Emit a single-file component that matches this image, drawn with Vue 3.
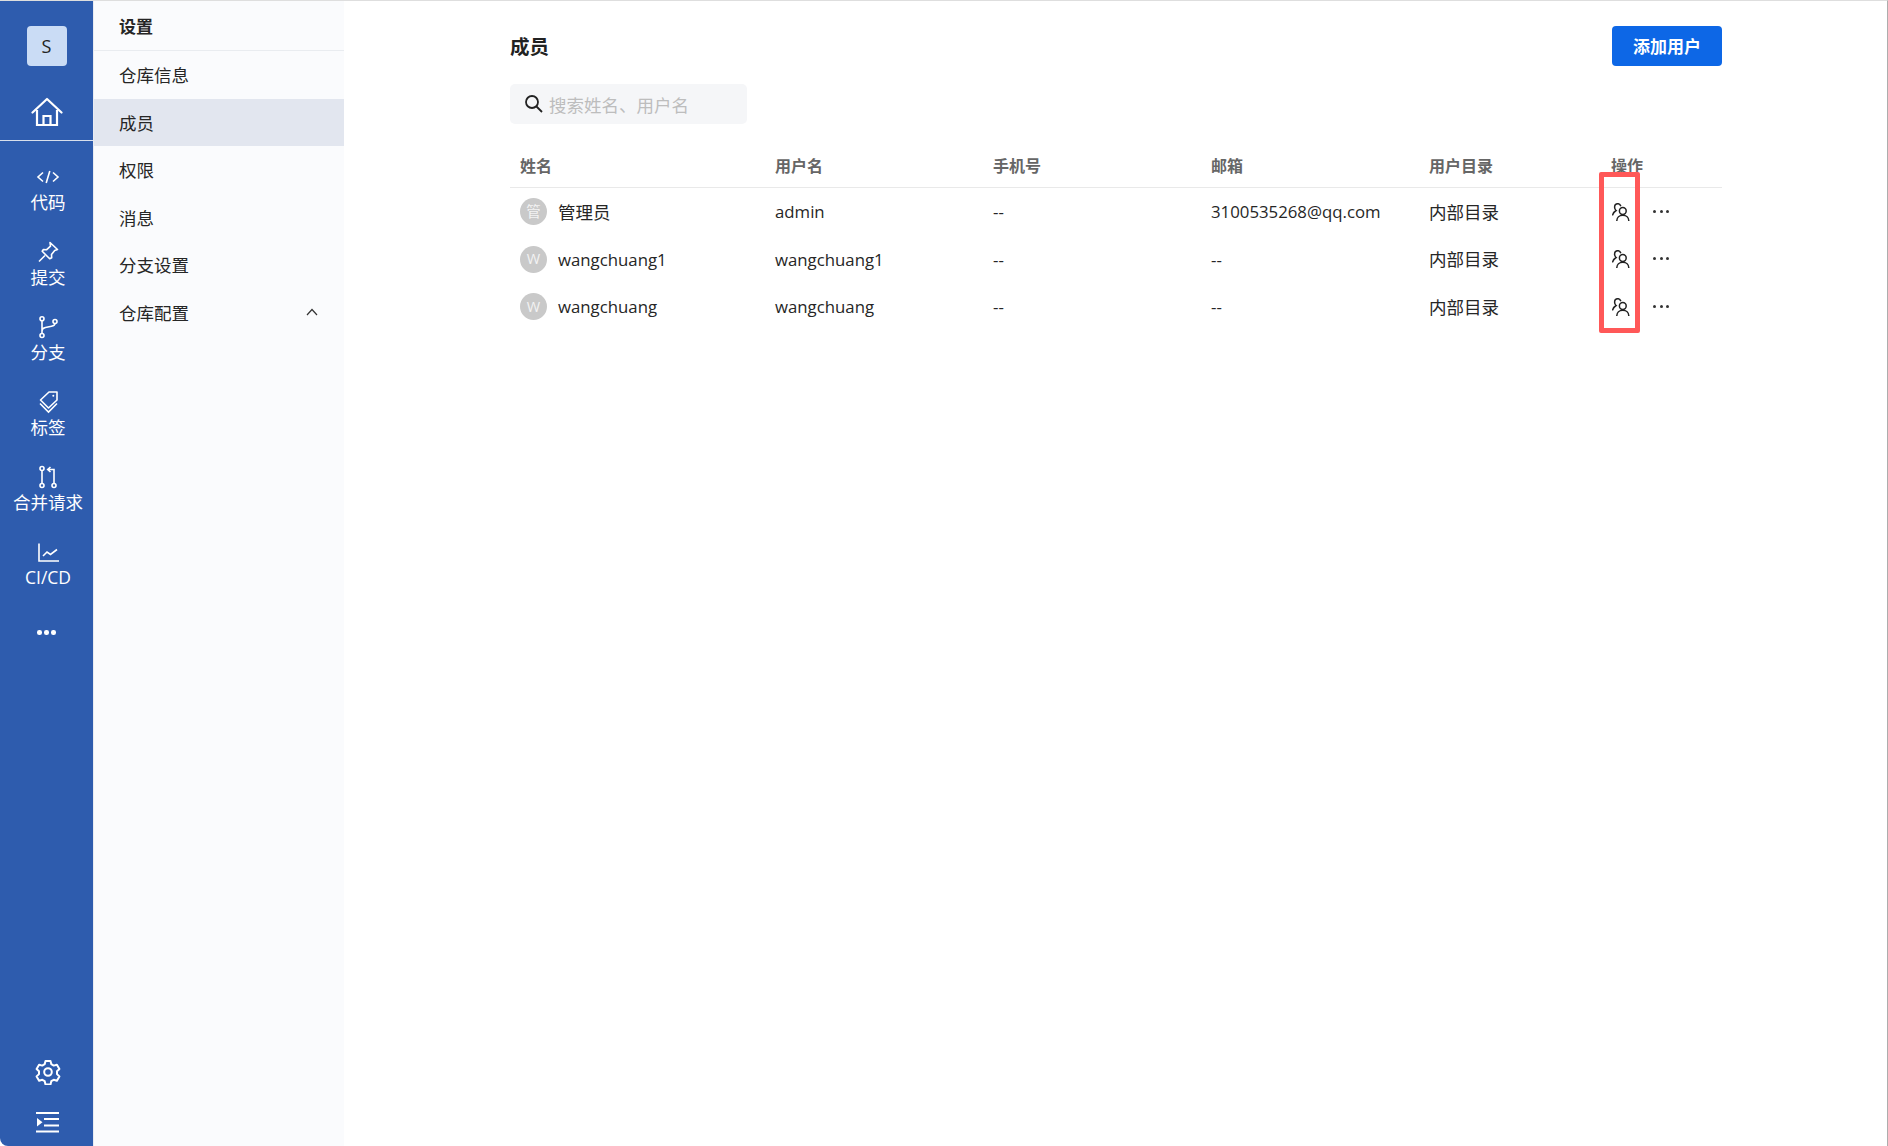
<script setup>
const navItems = [
  { label: '代码', icon: 'code' },
  { label: '提交', icon: 'pin' },
  { label: '分支', icon: 'branch' },
  { label: '标签', icon: 'tag' },
  { label: '合并请求', icon: 'merge' },
  { label: 'CI/CD', icon: 'chart' }
]
const menu = ['仓库信息', '成员', '权限', '消息', '分支设置']
const cols = ['姓名', '用户名', '手机号', '邮箱', '用户目录', '操作']
const rows = [
  { avatar: '管', name: '管理员', user: 'admin', phone: '--', mail: '3100535268@qq.com', dir: '内部目录' },
  { avatar: 'W', name: 'wangchuang1', user: 'wangchuang1', phone: '--', mail: '--', dir: '内部目录' },
  { avatar: 'W', name: 'wangchuang', user: 'wangchuang', phone: '--', mail: '--', dir: '内部目录' }
]
const isLatin = (s) => /^[\x00-\x7f]+$/.test(s)
</script>

<template>
  <div class="app">
    <aside class="rail">
      <div class="logo">S</div>
      <div class="home">
        <svg width="32" height="30" viewBox="0 0 32 30" fill="none" stroke="#fff" stroke-width="2.200">
          <path d="M1.500 15.500 16 2l14.500 13.500" stroke-linejoin="round" stroke-linecap="round" />
          <path d="M6 13v15h20V13" />
          <path d="M12.500 28v-9h7v9" />
        </svg>
      </div>
      <nav class="rail-nav">
        <div v-for="item in navItems" :key="item.label" class="rail-item">
          <svg class="rail-icon" width="24" height="24" viewBox="0 0 24 24" fill="none" stroke="#fff" stroke-width="1.600">
            <g v-if="item.icon === 'code'">
              <path d="M7 7.500 2 12l5 4.500M17 7.500l5 4.500-5 4.500M13.800 6l-3.600 12" />
            </g>
            <g v-else-if="item.icon === 'pin'">
              <path d="M14 2.500 21.500 9.500l-2.800 1-3.200 4 .2 3.300-2 1-7.500-7.500 1.200-1.800 3.300.2 3.800-3.500z" stroke-linejoin="round" />
              <path d="M9 15.500 3 21.500" />
            </g>
            <g v-else-if="item.icon === 'branch'">
              <circle cx="6" cy="3.800" r="2" />
              <circle cx="6" cy="20.500" r="2" />
              <circle cx="19" cy="6.500" r="2" />
              <path d="M6 6v12.300M6 16c0-2.500 1-3 3.500-3.500l6-1.200c2.500-.5 3.500-1.500 3.500-3" />
            </g>
            <g v-else-if="item.icon === 'tag'">
              <path d="M13 2h8v8l-8.500 8L4.500 10z" stroke-linejoin="round" />
              <circle cx="17.300" cy="5.800" r="1" fill="#fff" stroke="none" />
              <path d="M4 13.500 12.500 22l8.500-8.500" />
            </g>
            <g v-else-if="item.icon === 'merge'">
              <circle cx="6" cy="3.500" r="2" />
              <circle cx="6" cy="20.500" r="2" />
              <circle cx="18" cy="20.500" r="2" />
              <path d="M6 5.500v13M18 18.500V4.500h-6M14.500 2l-2.800 2.500 2.800 2.500" />
            </g>
            <g v-else>
              <path d="M3 3.500V21h20" />
              <path d="M7 16 11 12l3.500 2.500L21 9.500" />
            </g>
          </svg>
          <span class="rail-label">{{ item.label }}</span>
        </div>
      </nav>
      <div class="rail-more"><i></i><i></i><i></i></div>
      <div class="rail-bottom">
        <svg width="26" height="26" viewBox="0 0 26 26" fill="none" stroke="#fff" stroke-width="2" stroke-linejoin="round">
          <path d="M10.500 2h5l.8 3.200 2.400 1.400 3.200-.9 2.500 4.300-2.400 2.300v2.800l2.400 2.300-2.500 4.300-3.200-.9-2.400 1.400-.8 3.200h-5l-.8-3.200-2.400-1.400-3.200.9-2.500-4.300 2.400-2.300v-2.800L1.600 10l2.500-4.300 3.200.9 2.400-1.400z" />
          <circle cx="13" cy="13" r="3.800" />
        </svg>
        <svg class="fold" width="24" height="21" viewBox="0 0 24 21" fill="#fff">
          <rect x="0" y="0" width="23" height="2" />
          <rect x="8" y="6" width="15" height="2" />
          <rect x="8" y="12.500" width="15" height="2" />
          <rect x="0" y="18.500" width="23" height="2" />
          <path d="M1 6l5.500 4.200L1 14.500z" />
        </svg>
      </div>
    </aside>

    <aside class="panel">
      <div class="panel-title">设置</div>
      <ul class="menu">
        <li v-for="m in menu" :key="m" :class="{ active: m === '成员' }">{{ m }}</li>
        <li class="group">
          <span class="group-label">仓库配置</span>
          <svg width="12" height="8" viewBox="0 0 12 8" fill="none" stroke="#333" stroke-width="1.200"><path d="M1 7l5-5.500L11 7" /></svg>
        </li>
      </ul>
    </aside>

    <main class="main">
      <div class="content">
        <header class="head">
          <h1>成员</h1>
          <button class="add">添加用户</button>
        </header>
        <div class="search">
          <svg width="20" height="20" viewBox="0 0 20 20" fill="none" stroke="#222" stroke-width="1.800">
            <circle cx="8" cy="8" r="6" />
            <path d="M12.500 12.500 18 18" />
          </svg>
          <span>搜索姓名、用户名</span>
        </div>
        <div class="table">
          <div class="tr th">
            <div v-for="c in cols" :key="c" class="td">{{ c }}</div>
          </div>
          <div v-for="r in rows" :key="r.user" class="tr">
            <div class="td name">
              <span class="avatar">{{ r.avatar }}</span>
              <span :class="{ latin: isLatin(r.name) }">{{ r.name }}</span>
            </div>
            <div class="td latin">{{ r.user }}</div>
            <div class="td latin">{{ r.phone }}</div>
            <div class="td latin">{{ r.mail }}</div>
            <div class="td">{{ r.dir }}</div>
            <div class="td ops">
              <svg width="18" height="18" viewBox="0 0 18 18" fill="none" stroke="#222" stroke-width="1.500" stroke-linecap="round">
                <circle cx="10.800" cy="8" r="3.400" />
                <path d="M4.800 17.800c0-3.400 2.600-5.600 6-5.600s6 2.200 6 5.600" />
                <path d="M8.600 2.600C8 1.400 7 .7 5.800.7 3.800.7 2.600 2.300 2.600 4.300c0 1.300.5 2.500 1.500 3.200C2.500 8.500 1.200 10 .7 11.800" />
              </svg>
              <span class="dots"><i></i><i></i><i></i></span>
            </div>
          </div>
          <div class="mark"></div>
        </div>
      </div>
    </main>
  </div>
</template>

<style>
html, body { margin: 0; background: #fff; }
</style>

<style scoped>
.app {
  display: flex;
  height: 1146px;
  box-sizing: border-box;
  border-top: 1px solid #dedede;
  border-right: 1px solid #adadad;
  background: #fff;
  font-family: "Open Sans", "Noto Sans CJK SC", sans-serif;
  font-size: 17.500px;
  color: #262626;
}
.rail {
  width: 93px;
  flex: none;
  box-sizing: border-box;
  padding-left: 3px;
  display: flex;
  flex-direction: column;
  align-items: center;
  background: #2e5cae;
  color: #fff;
  border-bottom-left-radius: 8px;
}
.logo {
  width: 40px;
  height: 40px;
  margin-top: 25px;
  margin-left: -3px;
  border-radius: 4px;
  background: #cadcf5;
  color: #222;
  display: flex;
  align-items: center;
  justify-content: center;
  font-size: 18px;
}
.home {
  align-self: stretch;
  margin-left: -3px;
  height: 75px;
  box-sizing: border-box;
  border-bottom: 1px solid #d8dfec;
  display: flex;
  justify-content: center;
  padding-top: 31px;
}
.rail-nav {
  display: flex;
  flex-direction: column;
  align-items: center;
  padding-top: 24px;
}
.rail-item {
  height: 75px;
  display: flex;
  flex-direction: column;
  align-items: center;
}
.rail-label {
  line-height: 24px;
  margin-top: 1px;
  white-space: nowrap;
}
.rail-more {
  display: flex;
  gap: 2.500px;
  margin-top: 15px;
  margin-left: -3px;
}
.rail-more i {
  width: 4.500px;
  height: 4.500px;
  border-radius: 50%;
  background: #fff;
}
.rail-bottom {
  margin-top: auto;
  display: flex;
  flex-direction: column;
  align-items: center;
  padding-bottom: 13px;
  gap: 27px;
}
.panel {
  width: 251px;
  flex: none;
  box-sizing: border-box;
  background: #fafbfd;
  border-left: 1px solid #e8ebf2;
}
.panel-title {
  height: 50px;
  box-sizing: border-box;
  border-bottom: 1px solid #e9ecf0;
  padding-left: 25px;
  line-height: 51px;
  font-weight: 700;
  font-size: 17px;
}
.menu {
  list-style: none;
  margin: 0;
  padding: 0;
}
.menu li {
  height: 47.500px;
  line-height: 49px;
  padding-left: 25px;
}
.menu li.active { background: #e2e6ef; }
.menu li.group {
  display: flex;
  align-items: center;
  justify-content: space-between;
  padding-right: 26px;
}
.group-label { margin-top: 2px; }
.main {
  flex: 1;
  min-width: 0;
}
.content {
  width: 1212px;
  margin-left: 166px;
}
.head {
  display: flex;
  align-items: center;
  justify-content: space-between;
  padding-top: 25px;
}
.head h1 {
  margin: 0 0 1px 0;
  font-size: 19.500px;
  font-weight: 700;
  color: #222;
}
.add {
  width: 110px;
  height: 40px;
  border: 0;
  padding: 0 0 2px;
  border-radius: 4px;
  background: #0d67e6;
  color: #fff;
  font: 700 17px "Open Sans", "Noto Sans CJK SC", sans-serif;
}
.search {
  width: 237px;
  height: 40px;
  margin-top: 18px;
  border-radius: 5px;
  background: #f5f6f8;
  display: flex;
  align-items: center;
  gap: 5px;
  padding-left: 14px;
  box-sizing: border-box;
  color: #bdbdbd;
}
.table {
  position: relative;
  margin-top: 18px;
}
.tr {
  display: grid;
  grid-template-columns: 255px 218px 218px 218px 182px 121px;
  height: 47.500px;
  align-items: center;
  line-height: 26px;
}
.th {
  height: 45px;
  border-bottom: 1px solid #e9e9e9;
  font-size: 16px;
  font-weight: 700;
  color: #666;
}
.th .td { padding-top: 2px; }
.td {
  padding-left: 10px;
  white-space: nowrap;
}
.latin { font-size: 16.800px; padding-top: 1px; }
.name {
  display: flex;
  align-items: center;
  gap: 11px;
}
.avatar {
  width: 27px;
  height: 27px;
  border-radius: 50%;
  background: #c9c9c9;
  color: #f3f3f3;
  font-size: 14.500px;
  display: flex;
  align-items: center;
  justify-content: center;
}
.ops {
  display: flex;
  align-items: center;
  gap: 23px;
  padding-left: 11px;
}
.dots { display: flex; gap: 3.500px; margin-top: -1px; }
.dots i {
  width: 3px;
  height: 3px;
  border-radius: 50%;
  background: #333;
}
.mark {
  position: absolute;
  left: 1089px;
  top: 30px;
  width: 41px;
  height: 161px;
  box-sizing: border-box;
  border: 5px solid #ff5858;
  border-radius: 2px;
}
</style>
